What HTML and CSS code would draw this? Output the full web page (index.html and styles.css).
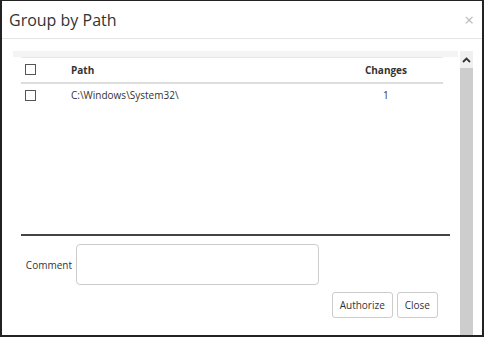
FILE: index.html
```html
<!DOCTYPE html>
<html lang="en">
<head>
    <meta charset="UTF-8">
    <title>Group by Path</title>
    <link rel="stylesheet" href="styles.css">
</head>
<body>
<div class="modal">
    <div class="modal-header">
        <h1>Group by Path</h1>
        <span class="close-x">&times;</span>
    </div>

    <div class="modal-body">
        <div class="pane">
            <div class="band"></div>
            <table class="grid">
                <thead>
                <tr>
                    <th class="col-check"><span class="box"></span></th>
                    <th class="col-path">Path</th>
                    <th class="col-changes">Changes</th>
                </tr>
                </thead>
                <tbody>
                <tr>
                    <td class="col-check"><span class="box"></span></td>
                    <td class="col-path">C:\Windows\System32\</td>
                    <td class="col-changes">1</td>
                </tr>
                </tbody>
            </table>

            <div class="footer">
                <div class="comment-row">
                    <label for="comment">Comment</label>
                    <textarea id="comment"></textarea>
                </div>
                <div class="buttons">
                    <button>Authorize</button>
                    <button>Close</button>
                </div>
            </div>
        </div>

        <div class="scrollbar">
            <div class="arrow">
                <svg width="9" height="6" viewBox="0 0 9 6">
                    <path d="M1 5 L4.5 1.5 L8 5" fill="none" stroke="#333" stroke-width="1.8"></path>
                </svg>
            </div>
            <div class="thumb"></div>
        </div>
    </div>
</div>
</body>
</html>
```

FILE: styles.css
```css
* {
    box-sizing: border-box;
}

body {
    margin: 0;
    font-family: 'Open Sans', 'Noto Sans', sans-serif;
    background-color: #fff;
    color: #333;
}

.modal {
    width: 484px;
    height: 337px;
    border: 2px solid #222;
    border-top-width: 1px;
    display: flex;
    flex-direction: column;
    background-color: #fff;
}

.modal-header {
    height: 38px;
    border-bottom: 1px solid #e5e5e5;
    display: flex;
    align-items: center;
    justify-content: space-between;
    padding: 0 8px 0 7px;
}

.modal-header h1 {
    margin: 0;
    font-size: 16px;
    font-weight: normal;
    color: #333;
}

.close-x {
    font-size: 17px;
    color: #bbb;
    line-height: 1;
}

.modal-body {
    flex: 1;
    display: flex;
    padding: 12px 0 0 11px;
}

.pane {
    flex: 1;
    display: flex;
    flex-direction: column;
}

.band {
    height: 6px;
    background-color: #f4f4f4;
}

.grid {
    margin-left: 8px;
    width: 422px;
    border-collapse: collapse;
    font-size: 10px;
}

.grid th {
    height: 25px;
    font-weight: bold;
    text-align: left;
    border-top: 1px solid #e8e8e8;
    border-bottom: 2px solid #ddd;
    background-color: #fff;
}

.grid td {
    height: 24px;
}

.col-check {
    width: 49px;
    padding-left: 4px;
}

.grid .col-changes {
    width: 78px;
    padding-right: 36px;
    text-align: center;
}

.box {
    display: block;
    width: 11px;
    height: 11px;
    border: 1px solid #555;
    background-color: #fff;
}

.footer {
    margin-top: auto;
    margin-left: 8px;
    margin-right: 8px;
    border-top: 2px solid #444;
    padding: 8px 0 0 0;
    height: 101px;
}

.comment-row {
    display: flex;
    align-items: center;
}

.comment-row label {
    font-size: 10px;
    width: 55px;
    text-align: right;
    padding-right: 4px;
}

.comment-row textarea {
    width: 243px;
    height: 41px;
    border: 1px solid #ccc;
    border-radius: 4px;
    resize: none;
    outline: none;
}

.buttons {
    display: flex;
    justify-content: flex-end;
    gap: 4px;
    margin-top: 7px;
    padding-right: 12px;
}

.buttons button {
    height: 26px;
    padding: 0 7px;
    border: 1px solid #ccc;
    border-radius: 3px;
    background-color: #fff;
    font-family: 'Open Sans', 'Noto Sans', sans-serif;
    font-size: 10px;
    color: #333;
}

.scrollbar {
    width: 13px;
    margin-left: 2px;
    margin-right: 9px;
    display: flex;
    flex-direction: column;
}

.arrow {
    height: 17px;
    background-color: #f0f0f0;
    display: flex;
    align-items: center;
    justify-content: center;
}

.thumb {
    flex: 1;
    background-color: #cdcdcd;
}
```
